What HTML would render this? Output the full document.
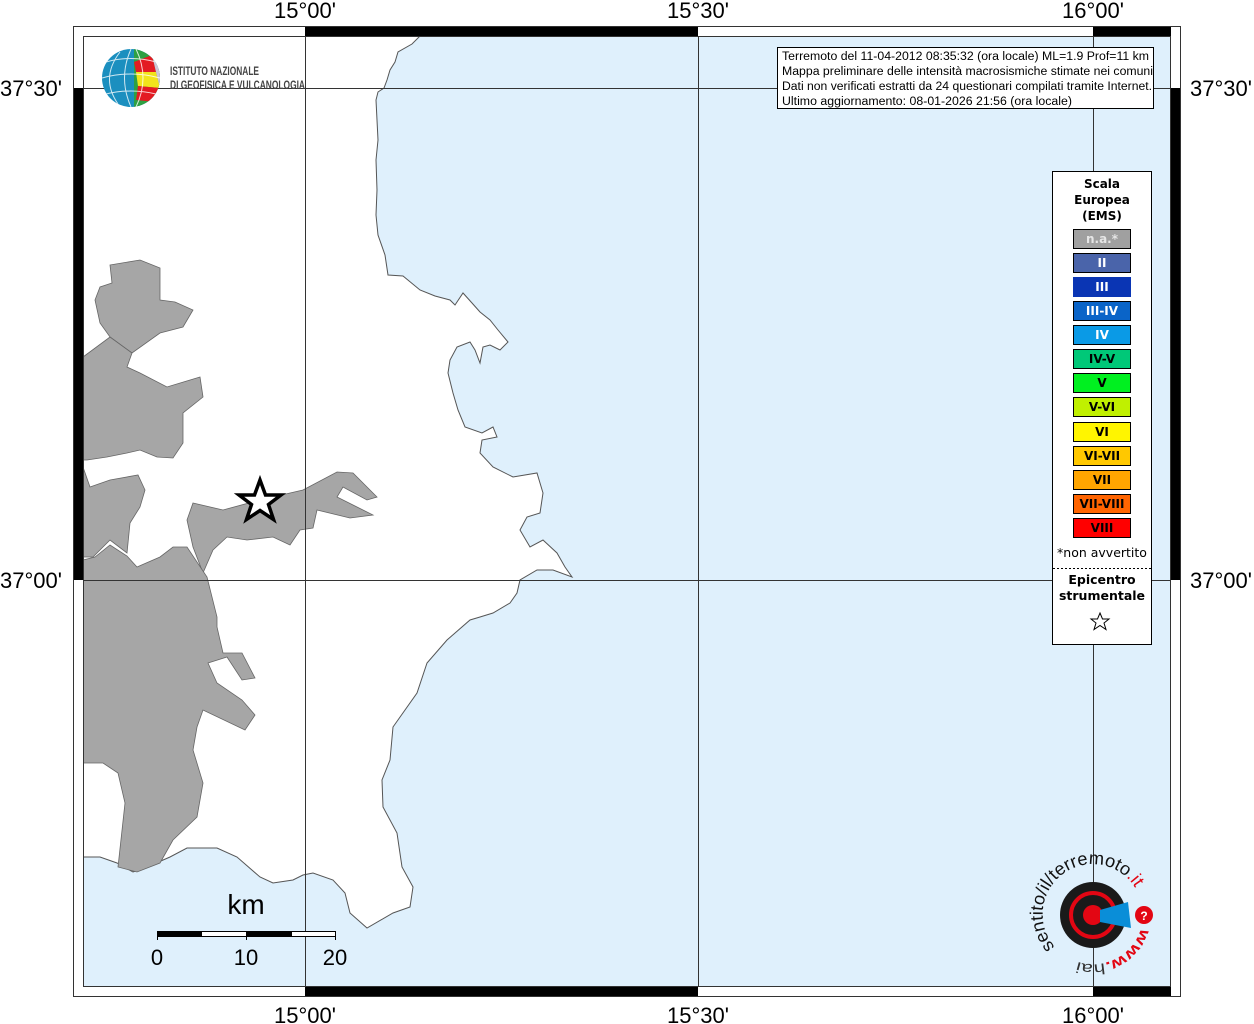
<!DOCTYPE html>
<html><head><meta charset="utf-8"><style>
html,body{margin:0;padding:0;background:#fff;}
svg{display:block;}
</style></head><body>
<svg width="1254" height="1024" viewBox="0 0 1254 1024" xmlns="http://www.w3.org/2000/svg" font-family="Liberation Sans, sans-serif">
<rect x="83" y="36" width="1088" height="951" fill="#dff0fc"/>
<path fill="#fff" stroke="#555" stroke-width="1" d="M83,36 L420,36 L412,44 L398,52 L395,62 L390,70 L387,80 L384,88 L378,92 L376,100 L377,120 L378,140 L376,160 L377,190 L376,215 L378,235 L385,255 L388,275 L403,276 L420,290 L435,296 L450,300 L455,305 L463,293 L472,303 L480,312 L490,320 L498,330 L508,342 L500,350 L490,345 L483,347 L480,363 L475,350 L470,342 L457,347 L450,360 L448,373 L453,393 L458,410 L465,427 L482,433 L493,427 L497,437 L482,440 L480,453 L493,467 L513,477 L537,473 L543,493 L540,513 L527,517 L520,530 L530,547 L543,540 L557,553 L565,567 L572,577 L553,570 L537,570 L520,580 L517,593 L510,603 L493,613 L480,617 L470,620 L447,640 L427,663 L417,693 L393,727 L390,760 L382,780 L383,807 L397,833 L402,867 L413,887 L410,907 L393,913 L367,928 L350,913 L345,893 L333,880 L313,873 L303,875 L293,880 L273,883 L260,877 L237,857 L217,848 L187,848 L170,857 L147,867 L133,872 L117,863 L100,857 L83,857 Z"/>
<g fill="#a6a6a6" stroke="#666" stroke-width="0.8">
<path d="M110,265 L140,260 L160,268 L160,300 L175,302 L193,310 L183,327 L160,333 L132,353 L110,337 L100,323 L95,300 L100,287 L112,283 Z"/>
<path d="M83,357 L110,337 L132,353 L127,367 L140,373 L167,387 L200,377 L203,397 L183,413 L183,443 L173,458 L157,457 L140,450 L127,453 L107,457 L87,460 L83,460 Z"/>
<path d="M193,503 L223,510 L260,500 L303,490 L337,472 L353,473 L377,497 L367,500 L343,487 L337,497 L357,507 L373,515 L350,518 L317,510 L313,528 L300,530 L290,545 L273,537 L247,540 L227,537 L213,550 L203,573 L193,547 L187,520 Z"/>
<path d="M83,467 L90,487 L110,480 L138,475 L145,490 L140,507 L130,523 L127,553 L110,540 L93,557 L83,557 Z"/>
<path d="M83,560 L95,557 L110,545 L127,556 L137,567 L160,557 L173,547 L187,547 L207,577 L217,617 L217,627 L223,653 L242,653 L255,678 L242,680 L227,657 L208,663 L217,683 L242,700 L255,715 L245,730 L203,710 L197,727 L193,750 L203,783 L197,817 L173,840 L160,863 L137,872 L118,867 L125,803 L118,773 L103,763 L83,763 Z"/>
</g>
<g stroke="#333" stroke-width="1">
<line x1="305.5" y1="36" x2="305.5" y2="987"/>
<line x1="698.5" y1="36" x2="698.5" y2="987"/>
<line x1="1093.5" y1="36" x2="1093.5" y2="987"/>
<line x1="83" y1="88.5" x2="1171" y2="88.5"/>
<line x1="83" y1="580.5" x2="1171" y2="580.5"/>
</g>
<rect x="74" y="27" width="1106" height="9" fill="#fff"/>
<rect x="74" y="987" width="1106" height="9" fill="#fff"/>
<rect x="74" y="27" width="9" height="969" fill="#fff"/>
<rect x="1171" y="27" width="9" height="969" fill="#fff"/>
<g fill="#000">
<rect x="305" y="27" width="393" height="9"/>
<rect x="1093" y="27" width="78" height="9"/>
<rect x="305" y="987" width="393" height="9"/>
<rect x="1093" y="987" width="78" height="9"/>
<rect x="74" y="88" width="9" height="492"/>
<rect x="1171" y="88" width="9" height="492"/>
</g>
<g stroke="#333" stroke-width="1" fill="none">
<rect x="73.5" y="26.5" width="1107" height="970"/>
<rect x="83.5" y="36.5" width="1087" height="950"/>
</g>
<g font-size="22" fill="#000">
<text x="305" y="18" text-anchor="middle">15°00'</text>
<text x="698" y="18" text-anchor="middle">15°30'</text>
<text x="1093" y="18" text-anchor="middle">16°00'</text>
<text x="305" y="1023" text-anchor="middle">15°00'</text>
<text x="698" y="1023" text-anchor="middle">15°30'</text>
<text x="1093" y="1023" text-anchor="middle">16°00'</text>
<text x="0" y="96">37°30'</text>
<text x="0" y="588">37°00'</text>
<text x="1190" y="96">37°30'</text>
<text x="1190" y="588">37°00'</text>
</g>
<defs><clipPath id="gc"><circle cx="131" cy="78" r="29"/></clipPath></defs>
<g clip-path="url(#gc)">
<rect x="100" y="48" width="62" height="62" fill="#1b8fbf"/>
<path d="M134,48 L162,48 L162,110 L134,110 Z" fill="#2ea043"/>
<path d="M134,62 L152,55 L156,72 L136,72 Z" fill="#e31b23"/>
<path d="M136,72 L156,72 L160,88 L138,86 Z" fill="#f2e31b"/>
<path d="M138,86 L160,88 L155,102 L136,100 Z" fill="#e31b23"/>
<path d="M152,55 L162,55 L162,100 L155,102 L160,88 L156,72 Z" fill="#cfc5d8"/>
<g stroke="#fff" stroke-width="1" fill="none" opacity="0.8">
<path d="M102,78 Q131,70 160,78"/><path d="M106,62 Q131,55 156,62"/><path d="M106,94 Q131,88 156,94"/>
<path d="M131,49 Q118,78 131,107"/><path d="M136,49 Q150,78 136,107"/><path d="M120,52 Q100,78 118,104"/>
</g>
</g>
<g font-family="Liberation Sans Narrow, Liberation Sans, sans-serif" font-size="12" font-weight="bold" fill="#444">
<text x="170" y="75" textLength="89" lengthAdjust="spacingAndGlyphs">ISTITUTO NAZIONALE</text>
<text x="170" y="89" textLength="135" lengthAdjust="spacingAndGlyphs">DI GEOFISICA E VULCANOLOGIA</text>
</g>
<rect x="777.5" y="47.5" width="376" height="61" fill="#fff" stroke="#000"/>
<g font-size="11.5" fill="#000">
<text x="782" y="60" textLength="367" lengthAdjust="spacingAndGlyphs">Terremoto del 11-04-2012 08:35:32 (ora locale) ML=1.9 Prof=11 km</text>
<text x="782" y="75" textLength="371" lengthAdjust="spacingAndGlyphs">Mappa preliminare delle intensità macrosismiche stimate nei comuni</text>
<text x="782" y="90" textLength="370" lengthAdjust="spacingAndGlyphs">Dati non verificati estratti da 24 questionari compilati tramite Internet.</text>
<text x="782" y="105" textLength="290" lengthAdjust="spacingAndGlyphs">Ultimo aggiornamento: 08-01-2026 21:56 (ora locale)</text>
</g>
<rect x="1052.5" y="171.5" width="99" height="473" fill="#fff" stroke="#000"/>
<g font-family="DejaVu Sans, sans-serif" font-size="12" font-weight="bold" text-anchor="middle" fill="#000">
<text x="1102" y="188">Scala</text>
<text x="1102" y="204">Europea</text>
<text x="1102" y="220">(EMS)</text>
</g>
<g stroke="#000" stroke-width="1">
<rect x="1073.5" y="229.5" width="57" height="19" fill="#a0a0a0"/>
<rect x="1073.5" y="253.5" width="57" height="19" fill="#4a64aa"/>
<rect x="1073.5" y="277.5" width="57" height="19" fill="#0a35b4" stroke="#0a35b4"/>
<rect x="1073.5" y="301.5" width="57" height="19" fill="#0a64c8"/>
<rect x="1073.5" y="325.5" width="57" height="19" fill="#0a9ae6"/>
<rect x="1073.5" y="349.5" width="57" height="19" fill="#00c878"/>
<rect x="1073.5" y="373.5" width="57" height="19" fill="#00f020"/>
<rect x="1073.5" y="397.5" width="57" height="19" fill="#c0f000"/>
<rect x="1073.5" y="422.5" width="57" height="19" fill="#fff500"/>
<rect x="1073.5" y="446.5" width="57" height="19" fill="#ffc800"/>
<rect x="1073.5" y="470.5" width="57" height="19" fill="#ffa500"/>
<rect x="1073.5" y="494.5" width="57" height="19" fill="#ff6400"/>
<rect x="1073.5" y="518.5" width="57" height="19" fill="#ff0000"/>
</g>
<g font-family="DejaVu Sans, sans-serif" font-size="12" font-weight="bold" text-anchor="middle">
<text x="1102" y="243" fill="#e6e6e6">n.a.*</text>
<text x="1102" y="267" fill="#fff">II</text>
<text x="1102" y="291" fill="#fff">III</text>
<text x="1102" y="315" fill="#fff">III-IV</text>
<text x="1102" y="339" fill="#fff">IV</text>
<text x="1102" y="363" fill="#000">IV-V</text>
<text x="1102" y="387" fill="#000">V</text>
<text x="1102" y="411" fill="#000">V-VI</text>
<text x="1102" y="436" fill="#000">VI</text>
<text x="1102" y="460" fill="#000">VI-VII</text>
<text x="1102" y="484" fill="#000">VII</text>
<text x="1102" y="508" fill="#000">VII-VIII</text>
<text x="1102" y="532" fill="#000">VIII</text>
</g>
<text x="1102" y="557" font-family="DejaVu Sans, sans-serif" font-size="12.5" text-anchor="middle">*non avvertito</text>
<line x1="1053" y1="568.5" x2="1151" y2="568.5" stroke="#000" stroke-dasharray="2,2"/>
<g font-family="DejaVu Sans, sans-serif" font-size="12.5" font-weight="bold" text-anchor="middle">
<text x="1102" y="584">Epicentro</text>
<text x="1102" y="600">strumentale</text>
</g>
<path d="M1100,613 L1102.5,619 L1109,619 L1104,623 L1106,629.5 L1100,625.5 L1094,629.5 L1096,623 L1091,619 L1097.5,619 Z" fill="#fff" stroke="#000" stroke-width="1"/>
<path d="M260,480 L265.5,495 L281,495 L268.5,504.5 L273.5,519.5 L260,510.5 L246.5,519.5 L251.5,504.5 L239,495 L254.5,495 Z" fill="#fff" stroke="#000" stroke-width="3.5" stroke-linejoin="miter"/>
<g stroke="#000" stroke-width="1">
<rect x="157.5" y="931.5" width="44" height="5" fill="#000"/>
<rect x="201.5" y="931.5" width="45" height="5" fill="#fff"/>
<rect x="246.5" y="931.5" width="45" height="5" fill="#000"/>
<rect x="291.5" y="931.5" width="44" height="5" fill="#fff"/>
<line x1="157.5" y1="931" x2="157.5" y2="940"/>
<line x1="246.5" y1="931" x2="246.5" y2="940"/>
<line x1="335.5" y1="931" x2="335.5" y2="940"/>
</g>
<g font-size="22" text-anchor="middle">
<text x="157" y="965">0</text>
<text x="246" y="965">10</text>
<text x="335" y="965">20</text>
<text x="246" y="914" font-size="28">km</text>
</g>
<defs>
<path id="arc" d="M1055,947 A50,50 0 1,1 1137,891"/>
<path id="arc2" d="M1141,928 A50,50 0 0,1 1058,950"/>
</defs>
<circle cx="1093" cy="915" r="33" fill="#1a1a1a"/>
<circle cx="1093" cy="915" r="22" fill="none" stroke="#e30613" stroke-width="4"/>
<circle cx="1093" cy="915" r="12" fill="#1a1a1a"/>
<circle cx="1093" cy="915" r="10" fill="#e30613"/>
<path d="M1100,910 L1128,902 L1131,928 L1100,922 Z" fill="#0a8ed8"/>
<circle cx="1144" cy="915" r="9" fill="#e30613"/>
<text x="1144" y="920" font-size="12" font-weight="bold" fill="#fff" text-anchor="middle">?</text>
<text font-size="18" fill="#111"><textPath href="#arc" textLength="165" lengthAdjust="spacingAndGlyphs">sentito/il/terremoto<tspan fill="#e30613">.it</tspan></textPath></text>
<text font-size="15" fill="#e30613" font-weight="bold"><textPath href="#arc2" textLength="80" lengthAdjust="spacingAndGlyphs">www.<tspan fill="#333" font-weight="normal">hai</tspan></textPath></text>
</svg>
</body></html>
